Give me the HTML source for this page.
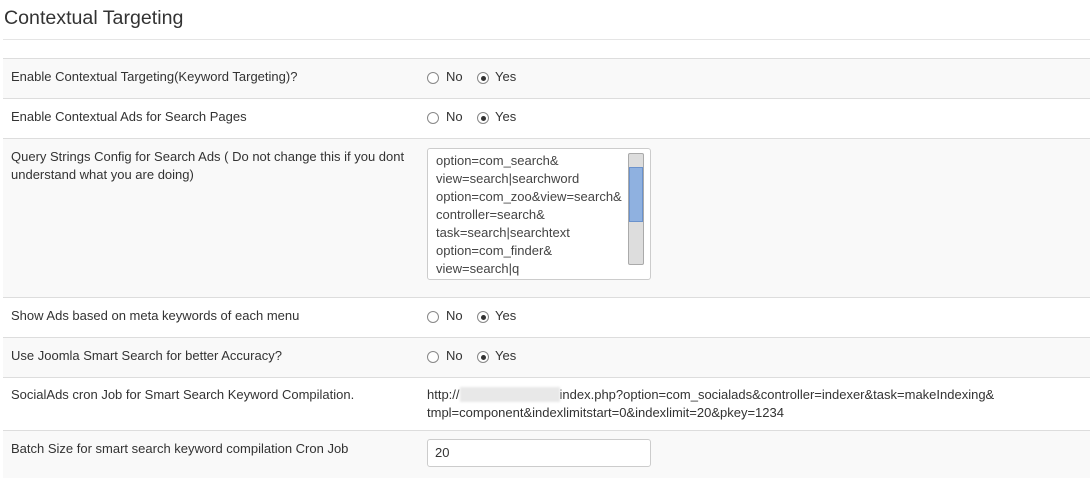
<!DOCTYPE html>
<html><head><style>
body{margin:0;background:#fff;font-family:"Liberation Sans",sans-serif;font-size:13px;color:#333;width:1090px;height:478px;overflow:hidden;position:relative}
h2{position:absolute;left:4px;top:7px;margin:0;font-weight:normal;font-size:19.6px;color:#333}
.hr{position:absolute;left:3px;right:0;top:39px;border-top:1px solid #e5e5e5}
.row{position:absolute;left:3px;right:0;border-top:1px solid #ddd;box-sizing:border-box}
.g{background:#f9f9f9}
.lab{position:absolute;left:8px;top:9px;line-height:18px;width:400px}
.val{position:absolute;left:424px;top:9px;line-height:18px}
.rv{position:absolute;left:0;top:9px;width:700px;height:18px;line-height:18px}
.rv span{position:absolute}
.r{width:12px;height:12px;border:1px solid #888;border-radius:50%;box-sizing:border-box;background:#fff;top:4px}
.r.on::after{content:"";position:absolute;left:2.5px;top:2.5px;width:5px;height:5px;border-radius:50%;background:#333}
.ta{position:absolute;left:424px;top:9px;width:224px;height:132px;border:1px solid #ccc;border-radius:3px;box-sizing:border-box;background:#fff;overflow:hidden}
.ta .t{position:absolute;left:8px;top:3px;line-height:18px;color:#444}
.sb{position:absolute;right:6px;top:4px;width:14px;height:110px;border:1px solid #aaa;border-radius:2px;background:#ddd}
.th{position:absolute;left:0;right:0;top:13px;height:55px;background:#8fb1e0;border:1px solid #6b92cc;box-sizing:border-box}
.in{position:absolute;left:424px;top:8px;width:224px;height:28px;border:1px solid #ccc;border-radius:3px;box-sizing:border-box;background:#fff;padding:6px 7px;line-height:14px}
.blur{display:inline-block;width:100px;height:15px;background:#e8e8e8;vertical-align:-3px;filter:blur(1px)}
</style></head><body>
<h2>Contextual Targeting</h2>
<div class="hr"></div>
<div class="row g" style="top:58px;height:40px"><div class="lab">Enable Contextual Targeting(Keyword Targeting)?</div><div class="rv"><span class="r" style="left:424px"></span><span style="left:443px">No</span><span class="r on" style="left:474px"></span><span style="left:492px">Yes</span></div></div>
<div class="row" style="top:98px;height:40px"><div class="lab">Enable Contextual Ads for Search Pages</div><div class="rv"><span class="r" style="left:424px"></span><span style="left:443px">No</span><span class="r on" style="left:474px"></span><span style="left:492px">Yes</span></div></div>
<div class="row g" style="top:138px;height:159px"><div class="lab">Query Strings Config for Search Ads ( Do not change this if you dont understand what you are doing)</div>
<div class="ta"><div class="t">option=com_search&amp;<br>view=search|searchword<br>option=com_zoo&amp;view=search&amp;<br>controller=search&amp;<br>task=search|searchtext<br>option=com_finder&amp;<br>view=search|q</div><div class="sb"><div class="th"></div></div></div></div>
<div class="row" style="top:297px;height:40px"><div class="lab">Show Ads based on meta keywords of each menu</div><div class="rv"><span class="r" style="left:424px"></span><span style="left:443px">No</span><span class="r on" style="left:474px"></span><span style="left:492px">Yes</span></div></div>
<div class="row g" style="top:337px;height:40px"><div class="lab">Use Joomla Smart Search for better Accuracy?</div><div class="rv"><span class="r" style="left:424px"></span><span style="left:443px">No</span><span class="r on" style="left:474px"></span><span style="left:492px">Yes</span></div></div>
<div class="row" style="top:377px;height:53px"><div class="lab" style="top:8px">SocialAds cron Job for Smart Search Keyword Compilation.</div><div class="val" style="top:8px;left:424px">http://<span class="blur"></span>index.php?option=com_socialads&amp;controller=indexer&amp;task=makeIndexing&amp;<br>tmpl=component&amp;indexlimitstart=0&amp;indexlimit=20&amp;pkey=1234</div></div>
<div class="row g" style="top:430px;height:48px"><div class="lab" style="top:9px">Batch Size for smart search keyword compilation Cron Job</div><div class="in">20</div></div>
</body></html>
